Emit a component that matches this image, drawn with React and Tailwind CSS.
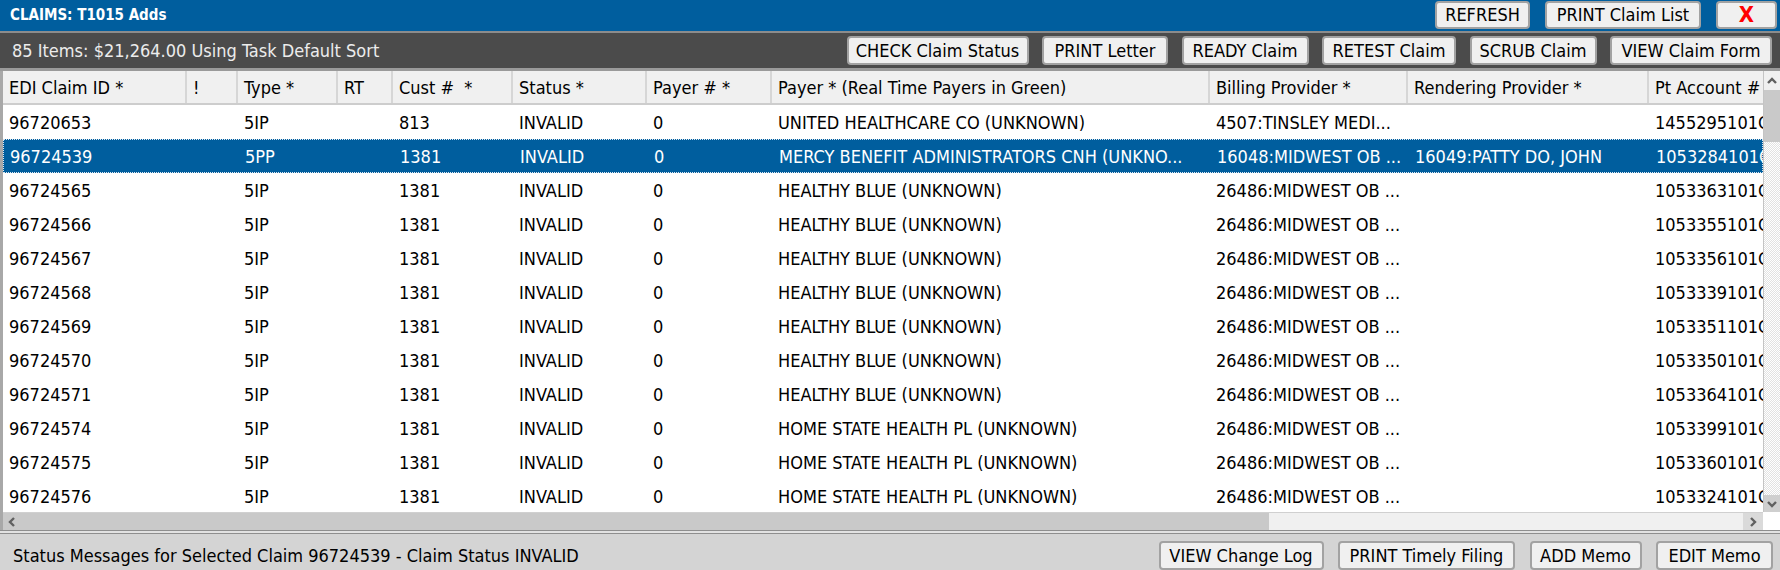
import React from "react";

const columns = [
  { key: "id", label: "EDI Claim ID *", w: "w-[184px]" },
  { key: "flag", label: "!", w: "w-[51px]" },
  { key: "type", label: "Type *", w: "w-[100px]" },
  { key: "rt", label: "RT", w: "w-[55px]" },
  { key: "cust", label: "Cust #  *", w: "w-[120px]" },
  { key: "status", label: "Status *", w: "w-[134px]" },
  { key: "payerNo", label: "Payer # *", w: "w-[125px]" },
  { key: "payer", label: "Payer * (Real Time Payers in Green)", w: "w-[438px]" },
  { key: "billing", label: "Billing Provider *", w: "w-[198px]" },
  { key: "rendering", label: "Rendering Provider *", w: "w-[241px]" },
  { key: "account", label: "Pt Account #", w: "w-[160px]" },
];

const healthy = "HEALTHY BLUE (UNKNOWN)";
const homeState = "HOME STATE HEALTH PL (UNKNOWN)";
const midwest = "26486:MIDWEST OB ...";

const rows = [
  { id: "96720653", type: "5IP", cust: "813", payer: "UNITED HEALTHCARE CO (UNKNOWN)", billing: "4507:TINSLEY MEDI...", rendering: "", account: "1455295101C" },
  { id: "96724539", type: "5PP", cust: "1381", payer: "MERCY BENEFIT ADMINISTRATORS CNH (UNKNO...", billing: "16048:MIDWEST OB ...", rendering: "16049:PATTY DO, JOHN", account: "1053284101C", selected: true },
  { id: "96724565", type: "5IP", cust: "1381", payer: healthy, billing: midwest, rendering: "", account: "1053363101C" },
  { id: "96724566", type: "5IP", cust: "1381", payer: healthy, billing: midwest, rendering: "", account: "1053355101C" },
  { id: "96724567", type: "5IP", cust: "1381", payer: healthy, billing: midwest, rendering: "", account: "1053356101C" },
  { id: "96724568", type: "5IP", cust: "1381", payer: healthy, billing: midwest, rendering: "", account: "1053339101C" },
  { id: "96724569", type: "5IP", cust: "1381", payer: healthy, billing: midwest, rendering: "", account: "1053351101C" },
  { id: "96724570", type: "5IP", cust: "1381", payer: healthy, billing: midwest, rendering: "", account: "1053350101C" },
  { id: "96724571", type: "5IP", cust: "1381", payer: healthy, billing: midwest, rendering: "", account: "1053364101C" },
  { id: "96724574", type: "5IP", cust: "1381", payer: homeState, billing: midwest, rendering: "", account: "1053399101C" },
  { id: "96724575", type: "5IP", cust: "1381", payer: homeState, billing: midwest, rendering: "", account: "1053360101C" },
  { id: "96724576", type: "5IP", cust: "1381", payer: homeState, billing: midwest, rendering: "", account: "1053324101C" },
];

function Btn({ w, h = "h-[29px]", tone = "text-black text-[18px]", children }) {
  return (
    <button
      type="button"
      className={`${w} ${h} ${tone} shrink-0 rounded-[4px] border-2 border-[#a2a2a2] bg-[#f0f0f0] leading-none whitespace-nowrap`}
    >
      {children}
    </button>
  );
}

function Chevron({ dir }) {
  const pts = {
    up: "2,8 6,4 10,8",
    down: "2,4 6,8 10,4",
    left: "8,2 4,6 8,10",
    right: "4,2 8,6 4,10",
  };
  return (
    <svg width="12" height="12" viewBox="0 0 12 12">
      <polyline points={pts[dir]} fill="none" stroke="#606060" strokeWidth="2.4" />
    </svg>
  );
}

export default function App() {
  return (
    <div className="w-[1780px] h-[570px] overflow-hidden bg-white flex flex-col font-['DejaVu_Sans_Condensed','DejaVu_Sans',sans-serif] [font-stretch:condensed] text-[18px] text-black">
      {/* title bar */}
      <div className="h-[31px] shrink-0 bg-[#005e9e] flex items-start">
        <div className="h-full flex items-center pl-[10px] text-[15px] font-bold text-white">CLAIMS: T1015 Adds</div>
        <div className="ml-auto flex gap-[15px] pt-px pr-[3px]">
          <Btn w="w-[95px]" h="h-[28px]">REFRESH</Btn>
          <Btn w="w-[156px]" h="h-[28px]">PRINT Claim List</Btn>
          <Btn w="w-[61px]" h="h-[28px]" tone="text-[#ff0000] text-[22px] font-bold">X</Btn>
        </div>
      </div>
      <div className="h-[2px] shrink-0 bg-[#8c8c8c]" />

      {/* summary bar */}
      <div className="h-[35px] shrink-0 bg-[#4b4b4b] flex items-center pr-[8px]">
        <div className="pl-[12px] text-[#ececec]">85 Items: $21,264.00 Using Task Default Sort</div>
        <div className="ml-auto flex gap-[13.5px]">
          <Btn w="w-[182px]">CHECK Claim Status</Btn>
          <Btn w="w-[126px]">PRINT Letter</Btn>
          <Btn w="w-[127px]">READY Claim</Btn>
          <Btn w="w-[134px]">RETEST Claim</Btn>
          <Btn w="w-[127px]">SCRUB Claim</Btn>
          <Btn w="w-[162px]">VIEW Claim Form</Btn>
        </div>
      </div>
      <div className="h-[3px] shrink-0 bg-[#9a9a9a]" />

      {/* grid */}
      <div className="h-[441px] shrink-0 flex border-l-[3px] border-[#a8a8a8]">
        <div className="flex-1 min-w-0 overflow-hidden">
          <div className="flex h-[34px] bg-[#f0f0f0] border-b-2 border-[#cdcdcd]">
            {columns.map((c) => (
              <div
                key={c.key}
                className={`${c.w} shrink-0 h-full flex items-center pl-[6px] border-r-2 border-[#d6d6d6] whitespace-pre`}
              >
                {c.label}
              </div>
            ))}
          </div>
          {rows.map((r) => (
            <div
              key={r.id}
              className={`flex h-[34px] ${r.selected ? "bg-[#005e9e] text-white border border-dotted border-[#dce8f2]" : "bg-white"}`}
            >
              {columns.map((c) => (
                <div
                  key={c.key}
                  className={`${c.w} shrink-0 h-full flex items-center pl-[6px] whitespace-nowrap overflow-hidden`}
                >
                  {c.key === "status" ? "INVALID" : c.key === "payerNo" ? "0" : r[c.key] || ""}
                </div>
              ))}
            </div>
          ))}
        </div>

        {/* vertical scrollbar */}
        <div className="w-[17px] shrink-0 flex flex-col border-l border-[#c4c4c4] bg-[#f0f0f0]">
          <div className="h-[19px] flex items-center justify-center">
            <Chevron dir="up" />
          </div>
          <div className="h-[52px] bg-[#c9c9c9]" />
          <div className="flex-1 bg-[repeating-conic-gradient(#e2e2e2_0%_25%,#ffffff_0%_50%)] bg-[length:2px_2px]" />
          <div className="h-[17px] bg-[#cfcfcf] flex items-center justify-center">
            <Chevron dir="down" />
          </div>
        </div>
      </div>

      {/* horizontal scrollbar */}
      <div className="h-[18px] shrink-0 flex border-l-[3px] border-[#a8a8a8]">
        <div className="flex-1 flex bg-[#f0f0f0] border-t border-[#d0d0d0]">
          <div className="w-[17px] flex items-center justify-center bg-[#c9c9c9]">
            <Chevron dir="left" />
          </div>
          <div className="w-[1249px] bg-[#c9c9c9]" />
          <div className="flex-1" />
          <div className="w-[20px] flex items-center justify-center bg-[#dadada]">
            <Chevron dir="right" />
          </div>
        </div>
        <div className="w-[17px] shrink-0 bg-white" />
      </div>

      {/* status bar */}
      <div className="h-[4px] shrink-0 border-y border-[#8e8e8e] bg-[#e2e2e2]" />
      <div className="flex-1 bg-[#d4d4d4] flex items-start pt-[7px] pr-[7px]">
        <div className="h-[29px] flex items-center pl-[13px]">
          Status Messages for Selected Claim 96724539 - Claim Status INVALID
        </div>
        <div className="ml-auto flex gap-[14.5px]">
          <Btn w="w-[165px]">VIEW Change Log</Btn>
          <Btn w="w-[177px]">PRINT Timely Filing</Btn>
          <Btn w="w-[112px]">ADD Memo</Btn>
          <Btn w="w-[117px]">EDIT Memo</Btn>
        </div>
      </div>
    </div>
  );
}
